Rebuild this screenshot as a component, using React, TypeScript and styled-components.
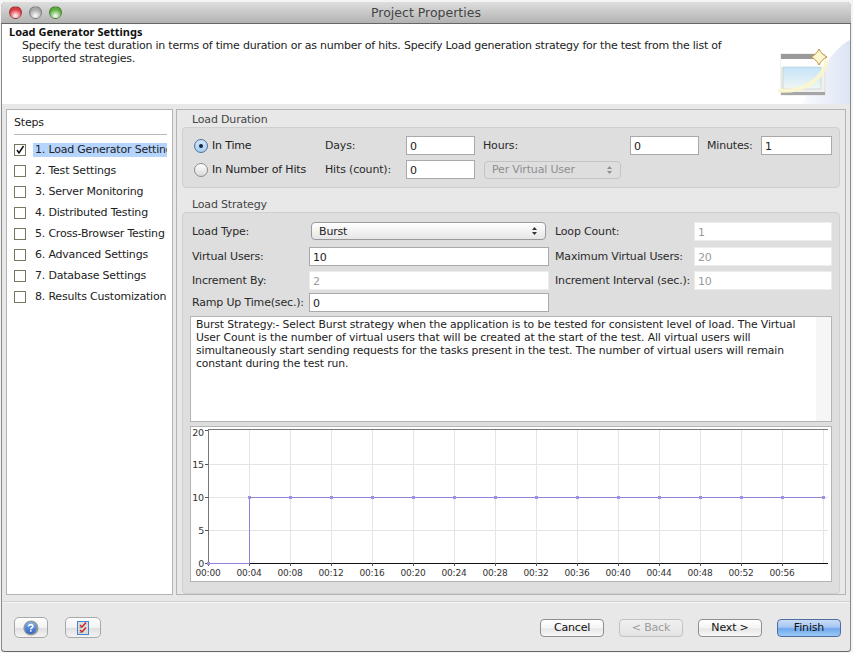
import { FunctionComponent } from 'react';
import styled, { createGlobalStyle } from 'styled-components';

const GlobalStyle = createGlobalStyle`
    html, body {
        margin: 0;
        padding: 0;
        height: 100%;
        background: #f4f4f4;
    }
    body {
        font-family: 'DejaVu Sans', sans-serif;
        font-size: 11px;
        letter-spacing: -0.17px;
        color: #222;
    }
`;

const Page = styled.div`
    width: 853px;
    height: 653px;
    padding: 2px 2px 1px 1px;
    box-sizing: border-box;
    overflow: hidden;
`;

const Window = styled.div`
    width: 100%;
    height: 100%;
    display: flex;
    flex-direction: column;
    background: #e8e8e8;
    border-radius: 5px 5px 4px 4px;
    box-shadow: inset 1px 0 0 #8a8a8a, inset -1px 0 0 #8a8a8a, inset 0 -1px 0 #666;
    overflow: hidden;
`;

const TitleBar = styled.div`
    height: 21px;
    flex: none;
    position: relative;
    display: flex;
    align-items: center;
    justify-content: center;
    background: linear-gradient(#dedede, #b2b2b2);
    border-bottom: 1px solid #666;
    color: #444;
    font-size: 12.5px;
    letter-spacing: 0;
`;

const Lights = styled.div`
    position: absolute;
    left: 8px;
    top: 4px;
    display: flex;
    gap: 7px;
`;

const Light = styled.span<{ $tone: string }>`
    width: 13px;
    height: 13px;
    border-radius: 50%;
    border: 1px solid rgba(0, 0, 0, 0.3);
    box-sizing: border-box;
    background: radial-gradient(circle at 50% 80%, #fff 0, ${(p) => p.$tone} 62%);
`;

const Header = styled.div`
    height: 80px;
    flex: none;
    position: relative;
    background: #fff;
    padding: 1px 0 0 7px;
    margin: 0 1px;
    box-sizing: border-box;
    overflow: hidden;
`;

const HeaderTitle = styled.div`
    font-family: 'Noto Sans', sans-serif;
    font-weight: bold;
    font-size: 11px;
    letter-spacing: 0;
    line-height: 13px;
    color: #111;
`;

const HeaderText = styled.div`
    margin: 1px 0 0 13px;
    width: 730px;
    line-height: 13px;
    letter-spacing: -0.23px;
`;

const Wizard = styled.svg`
    position: absolute;
    right: 0;
    bottom: 0;
`;

const Body = styled.div`
    flex: none;
    height: 486px;
    margin-top: 5px;
    padding: 0 5px;
    display: flex;
    gap: 3px;
`;

const StepsPanel = styled.div`
    width: 167px;
    flex: none;
    background: #fff;
    border: 1px solid #b4b4b4;
    box-sizing: border-box;
    padding: 0 5px 0 7px;
`;

const StepsTitle = styled.div`
    height: 24px;
    line-height: 26px;
    border-bottom: 1px solid #b8b8b8;
    margin-bottom: 4px;
`;

const StepRow = styled.div`
    height: 21px;
    display: flex;
    align-items: center;
    gap: 7px;
`;

const StepBox = styled.span`
    width: 12px;
    height: 12px;
    flex: none;
    box-sizing: border-box;
    border: 1px solid #77775f;
    background: #fff;
    display: flex;
`;

const StepLabel = styled.span<{ $selected?: boolean }>`
    flex: 1;
    height: 14px;
    line-height: 14px;
    padding-left: 2px;
    white-space: nowrap;
    overflow: hidden;
    letter-spacing: -0.2px;
    background: ${(p) => (p.$selected ? '#b5d5ff' : 'transparent')};
`;

const RightPanel = styled.div`
    flex: 1;
    border: 1px solid #b4b4b4;
    box-sizing: border-box;
    padding: 0 5px;
    display: flex;
    flex-direction: column;
`;

const GroupTitle = styled.div<{ $spaced?: boolean }>`
    height: 17px;
    line-height: 20px;
    padding-left: 10px;
    color: #444;
    margin-top: ${(p) => (p.$spaced ? '7px' : '0')};
`;

const Group = styled.div<{ $grow?: boolean }>`
    background: #dedede;
    border: 1px solid #cfcfcf;
    border-radius: 4px;
    box-sizing: border-box;
    padding: ${(p) => (p.$grow ? '9px' : '8px')} 7px 0;
    ${(p) => (p.$grow ? 'flex: 1;' : 'height: 61px;')}
`;

const DurationGrid = styled.div`
    display: grid;
    grid-template-columns: 123px 73px 69px 139px 69px 46px 71px;
    grid-template-rows: 19px 19px;
    column-gap: 8px;
    row-gap: 5px;
    margin-left: 4px;
    align-items: center;
`;

const StrategyGrid = styled.div`
    display: grid;
    grid-template-columns: 111px 240px 133px 138px;
    grid-template-rows: 25px 24px 22px 23px;
    column-gap: 6px;
    margin-left: 2px;
`;

const Label = styled.div`
    white-space: nowrap;
    line-height: 19px;
    color: #2a2a2a;
`;

const RadioRow = styled.div`
    display: flex;
    align-items: center;
    gap: 4px;
    white-space: nowrap;
    line-height: 19px;
`;

const Radio = styled.span<{ $on?: boolean }>`
    width: 14px;
    height: 14px;
    border-radius: 50%;
    box-sizing: border-box;
    display: flex;
    align-items: center;
    justify-content: center;
    border: 1px solid ${(p) => (p.$on ? '#4a6f9e' : '#8c8c8c')};
    background: ${(p) =>
        p.$on ? 'linear-gradient(#d5e6f8, #a8ccf0)' : 'linear-gradient(#fff, #d9d9d9)'};

    &::after {
        content: '';
        width: 4px;
        height: 4px;
        border-radius: 50%;
        background: ${(p) => (p.$on ? '#12263f' : 'transparent')};
    }
`;

const Field = styled.div<{ $disabled?: boolean }>`
    height: 19px;
    line-height: 19px;
    padding-left: 3px;
    box-sizing: border-box;
    background: #fff;
    border: 1px solid ${(p) => (p.$disabled ? '#ececec' : '#a9a9a9')};
    color: ${(p) => (p.$disabled ? '#9a9a9a' : '#222')};
`;

const SelectBox = styled.div<{ $disabled?: boolean }>`
    height: 18px;
    border-radius: 4px;
    box-sizing: border-box;
    display: flex;
    align-items: center;
    justify-content: space-between;
    padding: 0 7px;
    border: 1px solid ${(p) => (p.$disabled ? '#c4c4c4' : '#9a9a9a')};
    background: ${(p) => (p.$disabled ? '#dedede' : 'linear-gradient(#fff, #e6e6e6)')};
    color: ${(p) => (p.$disabled ? '#8f8f8f' : '#222')};
    width: ${(p) => (p.$disabled ? '137px' : '235px')};
    margin-left: ${(p) => (p.$disabled ? '1px' : '2px')};
`;

const Description = styled.div`
    height: 106px;
    box-sizing: border-box;
    background: #fff;
    border: 1px solid #b4b4b4;
    display: flex;
`;

const DescriptionText = styled.div`
    flex: 1;
    padding: 1px 5px;
    line-height: 13px;
    font-size: 10.8px;
    letter-spacing: -0.11px;
`;

const ScrollTrack = styled.div`
    width: 15px;
    flex: none;
    background: #f6f6f6;
`;

const ChartBox = styled.div`
    margin-top: 4px;
    height: 156px;
    box-sizing: border-box;
    background: #fff;
    border: 1px solid #b4b4b4;
`;

const Footer = styled.div`
    flex: 1;
    margin: 6px 1px 0;
    border-top: 1px solid #d0d0d0;
    box-shadow: inset 0 1px 0 #f6f6f6;
    padding: 15px 9px 0 12px;
    display: flex;
    align-items: flex-start;
`;

const IconButton = styled.div<{ $width: number }>`
    width: ${(p) => p.$width}px;
    height: 21px;
    margin-right: 17px;
    box-sizing: border-box;
    border: 1px solid #a8a8a8;
    border-radius: 5px;
    background: linear-gradient(#fff 0, #f2f2f2 50%, #dedede 51%, #f4f4f4 100%);
    display: flex;
    align-items: center;
    justify-content: center;
`;

const Spacer = styled.div`
    flex: 1;
`;

const PushButton = styled.div<{ $primary?: boolean; $disabled?: boolean }>`
    width: 64px;
    height: 18px;
    margin: 2px 0 0 15px;
    box-sizing: border-box;
    border-radius: 4px;
    text-align: center;
    line-height: 16px;
    border: 1px solid ${(p) => (p.$primary ? '#4f6e9f' : p.$disabled ? '#c2c2c2' : '#8f8f8f')};
    color: ${(p) => (p.$disabled ? '#9c9c9c' : '#111')};
    background: ${(p) =>
        p.$primary
            ? 'linear-gradient(#c9dcf6 0, #a6c6f2 45%, #6fa7ee 55%, #9ccaf6 100%)'
            : p.$disabled
            ? 'linear-gradient(#f0f0f0, #e4e4e4)'
            : 'linear-gradient(#fff 0, #f4f4f4 50%, #e6e6e6 55%, #f8f8f8 100%)'};
`;

const StepperIcon: FunctionComponent<{ color: string }> = ({ color }) => (
    <svg width="7" height="10" viewBox="0 0 7 10">
        <path d="M3.5 1 L6 4 H1 Z M3.5 9 L6 6 H1 Z" fill={color} />
    </svg>
);

const CheckMark = () => (
    <svg width="10" height="10" viewBox="0 0 10 10">
        <path d="M2 5 L4 8 L8.5 1" fill="none" stroke="#111" strokeWidth="1.5" />
    </svg>
);

const HelpIcon = () => (
    <svg width="16" height="16" viewBox="0 0 20 20">
        <defs>
            <linearGradient id="help" x1="0" y1="0" x2="0" y2="1">
                <stop offset="0" stopColor="#7fb0ee" />
                <stop offset="1" stopColor="#2f62c4" />
            </linearGradient>
        </defs>
        <circle cx="10" cy="10" r="9.5" fill="#9a9a9a" />
        <circle cx="9.5" cy="10" r="7.6" fill="url(#help)" />
        <path
            d="M7 8 C7.2 5 12.4 5 12.4 8 C12.4 9.8 9.7 9.8 9.7 11.6"
            fill="none"
            stroke="#fff"
            strokeWidth="2"
        />
        <rect x="8.7" y="12.6" width="2" height="2" fill="#fff" />
    </svg>
);

const ChecklistIcon = () => (
    <svg width="12" height="14" viewBox="0 0 12 14">
        <rect x="0.5" y="0.5" width="11" height="13" fill="#dcdcdc" stroke="#3f86d8" />
        <path d="M3 4 L5 6 L9 1.5 M3 9 L5 11 L9 6.5" fill="none" stroke="#c8242a" strokeWidth="1.5" />
        <path d="M2.5 6.5 H5 M2.5 11.5 H5" stroke="#8a8a8a" strokeWidth="1" />
    </svg>
);

const WizardIcon = () => (
    <Wizard width="72" height="66" viewBox="0 0 72 66">
        <defs>
            <linearGradient id="pane" x1="0" y1="0" x2="0" y2="1">
                <stop offset="0" stopColor="#c4e4f8" />
                <stop offset="1" stopColor="#f2f6f4" />
            </linearGradient>
            <linearGradient id="wash" x1="0" y1="0" x2="1" y2="0">
                <stop offset="0" stopColor="#fafbfe" />
                <stop offset="1" stopColor="#dde4f5" />
            </linearGradient>
        </defs>
        <path d="M72 2 C52 12 40 40 24 66 H72 Z" fill="url(#wash)" />
        <rect x="3" y="16" width="44" height="41" fill="#f1f1ee" stroke="#c9c9c4" strokeWidth="0.5" />
        <rect x="3" y="16" width="36" height="5" fill="#9a9a9a" />
        <rect x="3" y="21" width="44" height="8" fill="#fff" />
        <rect x="5" y="29" width="38" height="22" fill="url(#pane)" stroke="#b4c0c8" strokeWidth="0.5" />
        <rect x="3" y="54" width="44" height="3" fill="#a6a6a6" />
        <path d="M-3 52 C22 56 44 44 49 22" fill="none" stroke="#fbf6cc" strokeWidth="4" opacity="0.9" />
        <path
            d="M41 11 C43 15 45 17 49 19 C45 21 43 23 41 27 C39 23 37 21 33 19 C37 17 39 15 41 11 Z"
            fill="#fdf6cf"
            stroke="#b9933c"
        />
    </Wizard>
);

const steps = [
    '1. Load Generator Settings',
    '2. Test Settings',
    '3. Server Monitoring',
    '4. Distributed Testing',
    '5. Cross-Browser Testing',
    '6. Advanced Settings',
    '7. Database Settings',
    '8. Results Customization',
];

// plot coordinates are relative to the chart box
const plotLeft = 17;
const plotTop = 3;
const plotBottom = 136;
const stepX = 41;
const intervals = 15;
const yTicks = [
    { value: 20, y: 3, label: 9 },
    { value: 15, y: 37, label: 41 },
    { value: 10, y: 70, label: 74 },
    { value: 5, y: 103, label: 107 },
    { value: 0, y: 136, label: 140 },
];

const pad = (n: number) => (n < 10 ? `0${n}` : `${n}`);

const LoadChart = () => {
    const xs = Array.from({ length: intervals + 1 }, (_, i) => plotLeft + i * stepX);
    const right = plotLeft + 620;
    return (
        <svg width="640" height="154" viewBox="0 0 640 154" style={{ display: 'block' }}>
            {xs.slice(1).map((x) => (
                <line key={x} x1={x + 0.5} y1={plotTop} x2={x + 0.5} y2={plotBottom} stroke="#e4e4e4" />
            ))}
            {yTicks.slice(1, 4).map((t) => (
                <line key={t.value} x1={plotLeft} y1={t.y + 0.5} x2={right} y2={t.y + 0.5} stroke="#e4e4e4" />
            ))}
            <line x1={plotLeft} y1={2.5} x2={right} y2={2.5} stroke="#777" />
            <line x1={plotLeft + 0.5} y1={2} x2={plotLeft + 0.5} y2={plotBottom} stroke="#777" />
            <line x1={plotLeft} y1={plotBottom + 0.5} x2={right} y2={plotBottom + 0.5} stroke="#111" />
            {yTicks.map((t) => (
                <g key={t.value}>
                    <line x1={plotLeft - 3} y1={t.y + 0.5} x2={plotLeft} y2={t.y + 0.5} stroke="#555" />
                    <text
                        x={plotLeft - 4}
                        y={t.label}
                        textAnchor="end"
                        fontSize="9.5"
                        fill="#333"
                        fontFamily="DejaVu Sans, sans-serif"
                    >
                        {t.value}
                    </text>
                </g>
            ))}
            {xs.slice(0, intervals).map((x, i) => (
                <g key={x}>
                    <line x1={x + 0.5} y1={plotBottom} x2={x + 0.5} y2={plotBottom + 3} stroke="#555" />
                    <text
                        x={x}
                        y={plotBottom + 13}
                        textAnchor="middle"
                        fontSize="9"
                        fill="#333"
                        fontFamily="DejaVu Sans, sans-serif"
                    >
                        {`00:${pad(i * 4)}`}
                    </text>
                </g>
            ))}
            <path
                d={`M${plotLeft} ${plotBottom + 0.5} H${xs[1] + 0.5} V70.5 H${xs[intervals]}`}
                fill="none"
                stroke="#8f84dc"
            />
            {xs.map((x, i) => (
                <rect
                    key={x}
                    x={x - 1}
                    y={i === 0 ? plotBottom - 1 : 69}
                    width="3"
                    height="3"
                    fill="#9c92e4"
                />
            ))}
        </svg>
    );
};

const App = () => (
    <Page>
        <GlobalStyle />
        <Window>
            <TitleBar>
                <Lights>
                    <Light $tone="#dc3c44" />
                    <Light $tone="#a8a8a8" />
                    <Light $tone="#5cae3c" />
                </Lights>
                Project Properties
            </TitleBar>
            <Header>
                <HeaderTitle>Load Generator Settings</HeaderTitle>
                <HeaderText>
                    Specify the test duration in terms of time duration or as number of hits. Specify Load
                    generation strategy for the test from the list of supported strategies.
                </HeaderText>
                <WizardIcon />
            </Header>
            <Body>
                <StepsPanel>
                    <StepsTitle>Steps</StepsTitle>
                    {steps.map((step, i) => (
                        <StepRow key={step}>
                            <StepBox>{i === 0 && <CheckMark />}</StepBox>
                            <StepLabel $selected={i === 0}>{step}</StepLabel>
                        </StepRow>
                    ))}
                </StepsPanel>
                <RightPanel>
                    <GroupTitle>Load Duration</GroupTitle>
                    <Group>
                        <DurationGrid>
                            <RadioRow>
                                <Radio $on />
                                In Time
                            </RadioRow>
                            <Label>Days:</Label>
                            <Field>0</Field>
                            <Label>Hours:</Label>
                            <Field>0</Field>
                            <Label>Minutes:</Label>
                            <Field>1</Field>
                            <RadioRow>
                                <Radio />
                                In Number of Hits
                            </RadioRow>
                            <Label>Hits (count):</Label>
                            <Field>0</Field>
                            <SelectBox $disabled>
                                Per Virtual User
                                <StepperIcon color="#8f8f8f" />
                            </SelectBox>
                        </DurationGrid>
                    </Group>
                    <GroupTitle $spaced>Load Strategy</GroupTitle>
                    <Group $grow>
                        <StrategyGrid>
                            <Label>Load Type:</Label>
                            <SelectBox>
                                Burst
                                <StepperIcon color="#333" />
                            </SelectBox>
                            <Label>Loop Count:</Label>
                            <Field $disabled>1</Field>
                            <Label>Virtual Users:</Label>
                            <Field>10</Field>
                            <Label>Maximum Virtual Users:</Label>
                            <Field $disabled>20</Field>
                            <Label>Increment By:</Label>
                            <Field $disabled>2</Field>
                            <Label>Increment Interval (sec.):</Label>
                            <Field $disabled>10</Field>
                            <Label>Ramp Up Time(sec.):</Label>
                            <Field>0</Field>
                        </StrategyGrid>
                        <Description>
                            <DescriptionText>
                                Burst Strategy:- Select Burst strategy when the application is to be tested for
                                consistent level of load. The Virtual User Count is the number of virtual users
                                that will be created at the start of the test. All virtual users will simultaneously
                                start sending requests for the tasks present in the test. The number of virtual
                                users will remain constant during the test run.
                            </DescriptionText>
                            <ScrollTrack />
                        </Description>
                        <ChartBox>
                            <LoadChart />
                        </ChartBox>
                    </Group>
                </RightPanel>
            </Body>
            <Footer>
                <IconButton $width={34}>
                    <HelpIcon />
                </IconButton>
                <IconButton $width={36}>
                    <ChecklistIcon />
                </IconButton>
                <Spacer />
                <PushButton>Cancel</PushButton>
                <PushButton $disabled>&lt; Back</PushButton>
                <PushButton>Next &gt;</PushButton>
                <PushButton $primary>Finish</PushButton>
            </Footer>
        </Window>
    </Page>
);

export default App;
